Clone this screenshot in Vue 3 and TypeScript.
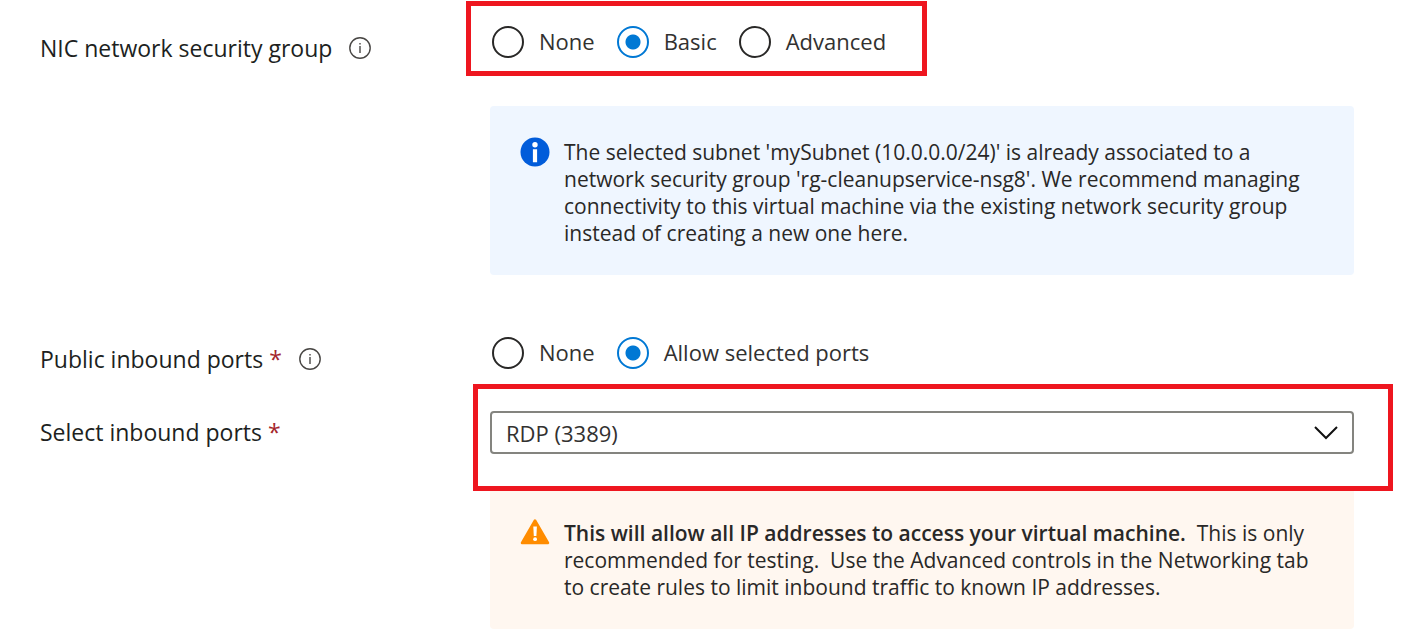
<script setup lang="ts">
import { ref } from 'vue'

interface Option {
  value: string
  label: string
}

const securityGroups: Option[] = [
  { value: 'none', label: 'None' },
  { value: 'basic', label: 'Basic' },
  { value: 'advanced', label: 'Advanced' },
]
const portModes: Option[] = [
  { value: 'none', label: 'None' },
  { value: 'allow', label: 'Allow selected ports' },
]
const ports: Option[] = [{ value: 'rdp', label: 'RDP (3389)' }]

const securityGroup = ref('basic')
const portMode = ref('allow')
const port = ref('rdp')
</script>

<template>
  <form class="form" @submit.prevent>
    <div class="row">
      <div class="caption caption-boxed-radios">
        <span id="nsg-label">NIC network security group</span>
        <button type="button" class="hint" aria-label="About the NIC network security group">
          <svg viewBox="0 0 22 22" aria-hidden="true">
            <circle cx="11" cy="11" r="10.2" />
            <path d="M11 9v7M11 6v1.5" />
          </svg>
        </button>
      </div>
      <div class="field">
        <div class="highlight highlight-radios">
          <div class="radios" role="radiogroup" aria-labelledby="nsg-label">
            <label v-for="o in securityGroups" :key="o.value" class="radio">
              <input v-model="securityGroup" type="radio" name="nsg" :value="o.value" />
              <span>{{ o.label }}</span>
            </label>
          </div>
        </div>
        <div class="message message-info">
          <svg class="message-icon" viewBox="0 0 30 30" aria-hidden="true">
            <circle cx="15" cy="15" r="14.5" fill="#015cda" />
            <circle cx="15" cy="7.7" r="2.7" fill="#fff" />
            <path d="M12.9 12.3h4.2v13h-4.2z" fill="#fff" />
          </svg>
          <p>
            The selected subnet 'mySubnet (10.0.0.0/24)' is already associated to a network security
            group 'rg-cleanupservice-nsg8'. We recommend managing connectivity to this virtual
            machine via the existing network security group instead of creating a new one here.
          </p>
        </div>
      </div>
    </div>

    <div class="row row-ports">
      <div class="caption">
        <span id="ports-label">Public inbound ports <span class="required">*</span></span>
        <button type="button" class="hint" aria-label="About public inbound ports">
          <svg viewBox="0 0 22 22" aria-hidden="true">
            <circle cx="11" cy="11" r="10.2" />
            <path d="M11 9v7M11 6v1.5" />
          </svg>
        </button>
      </div>
      <div class="field">
        <div class="radios" role="radiogroup" aria-labelledby="ports-label">
          <label v-for="o in portModes" :key="o.value" class="radio">
            <input v-model="portMode" type="radio" name="port-mode" :value="o.value" />
            <span>{{ o.label }}</span>
          </label>
        </div>
      </div>
    </div>

    <div class="row row-select">
      <div class="caption caption-boxed-select">
        <label for="port">Select inbound ports <span class="required">*</span></label>
      </div>
      <div class="field">
        <div class="highlight highlight-select">
          <div class="select">
            <select id="port" v-model="port">
              <option v-for="o in ports" :key="o.value" :value="o.value">{{ o.label }}</option>
            </select>
            <svg class="chevron" viewBox="0 0 24 14" aria-hidden="true">
              <path d="M1 1l11 11L23 1" />
            </svg>
          </div>
        </div>
        <div class="message message-warning">
          <svg class="message-icon" viewBox="0 0 30 30" aria-hidden="true">
            <path
              d="M15 2.5L28 25H2z"
              fill="#ff8c00"
              stroke="#ff8c00"
              stroke-width="2.5"
              stroke-linejoin="round"
            />
            <path d="M13.3 8.5h3.6l-.5 9.5h-2.6z" fill="#fff" />
            <circle cx="15.1" cy="21.2" r="1.9" fill="#fff" />
          </svg>
          <p>
            <strong>This will allow all IP addresses to access your virtual machine.</strong>&nbsp;
            This is only recommended for testing.&nbsp; Use the Advanced controls in the Networking
            tab to create rules to limit inbound traffic to known IP addresses.
          </p>
        </div>
      </div>
    </div>
  </form>
</template>

<style>
body {
  margin: 0;
  background: #fff;
}
</style>

<style scoped>
.form {
  padding: 1px 73px 0 40px;
  font-family: 'Open Sans', 'Noto Sans', sans-serif;
  font-size: 22px;
  line-height: 30px;
  color: #323130;
}
.row {
  display: grid;
  grid-template-columns: 450px minmax(0, 1fr);
}
.row-ports {
  margin-top: 62px;
}
.row-select {
  margin-top: 10px;
}
.caption {
  display: flex;
  align-items: center;
  align-self: start;
  gap: 17px;
  padding-top: 7px;
  font-size: 23px;
  font-weight: 500;
  color: #201f1e;
}
.caption-boxed-radios {
  padding-top: 32px;
}
.caption-boxed-select {
  padding-top: 33px;
}
.required {
  color: #a4262c;
}
.hint {
  width: 22px;
  height: 22px;
  padding: 0;
  border: 0;
  background: none;
}
.hint svg {
  display: block;
  fill: none;
  stroke: #484644;
  stroke-width: 1.4;
}
.highlight {
  position: relative;
  z-index: 1;
  border: 5px solid #ee161f;
}
.highlight-radios {
  width: fit-content;
  margin-left: -24px;
  padding: 20px 36px 13px 21px;
}
.highlight-select {
  margin: 0 -39px 0 -17px;
  padding: 22px 34px 32px 12px;
}
.radios {
  display: flex;
  gap: 22px;
  padding-left: 2px;
}
.highlight-radios .radios {
  padding-left: 0;
}
.radio {
  display: flex;
  align-items: flex-start;
  gap: 15px;
}
.radio input {
  appearance: none;
  box-sizing: border-box;
  width: 32px;
  height: 32px;
  margin: 0;
  border: 2px solid #292827;
  border-radius: 50%;
  background: #fff;
}
.radio input:checked {
  border-color: #0078d4;
  background: radial-gradient(circle, #0078d4 7px, #fff 8px);
}
.select {
  position: relative;
}
select {
  appearance: none;
  display: block;
  width: 100%;
  height: 43px;
  padding: 0 50px 0 14px;
  border: 2px solid #84847f;
  border-radius: 4px;
  background: #fff;
  font: inherit;
  color: #323130;
}
.chevron {
  position: absolute;
  top: 15px;
  right: 16px;
  width: 24px;
  height: 14px;
  fill: none;
  stroke: #111;
  stroke-width: 2;
  pointer-events: none;
}
.message {
  display: flex;
  align-items: flex-start;
  gap: 14px;
  padding: 33px 30px 28px;
  border-radius: 4px;
  font-size: 21px;
  line-height: 27px;
  font-weight: 500;
  color: #292827;
}
.message-info {
  margin-top: 30px;
  background: #eff6ff;
}
.message-warning {
  margin-top: -4px;
  background: #fff7f0;
}
.message-icon {
  flex: none;
  width: 30px;
  height: 30px;
  margin-top: -2px;
}
.message p {
  margin: 0;
}
.message strong {
  font-weight: 600;
}
</style>
